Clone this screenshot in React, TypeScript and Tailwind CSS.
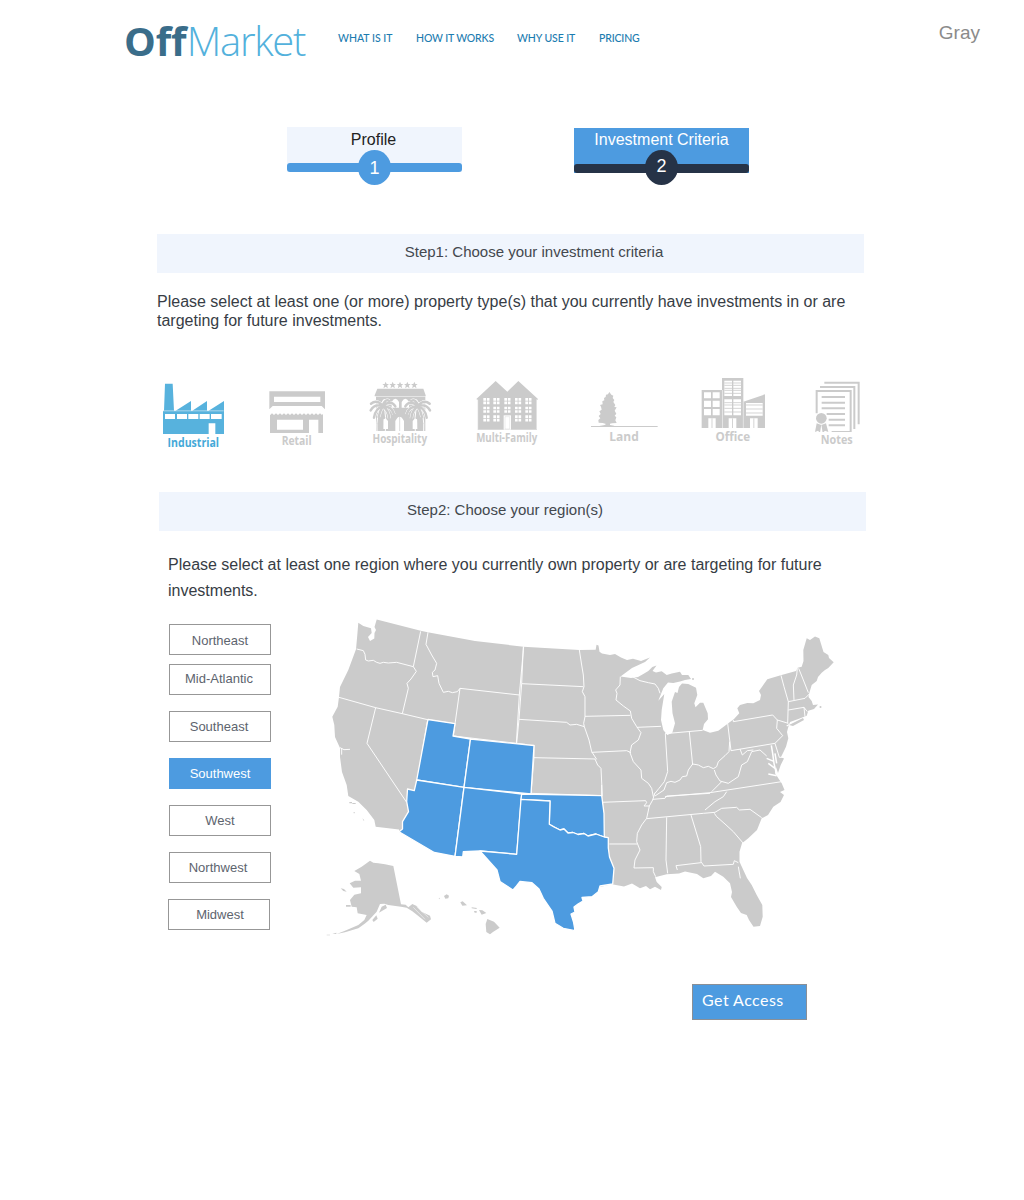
import React from "react";

const GRAY = "#cbcbcb";
const BLUE = "#4d9be0";

const navItems = [
  { label: "WHAT IS IT", cls: "ml-[33px] w-[54px]" },
  { label: "HOW IT WORKS", cls: "ml-[24px] w-[78px] tracking-[-0.15px]" },
  { label: "WHY USE IT", cls: "ml-[23px] w-[58px] tracking-[-0.1px]" },
  { label: "PRICING", cls: "ml-[24px] w-[42px] tracking-[-0.15px]" },
];

function Header() {
  return (
    <header className="flex h-[80px] pl-[124px] pr-[44px]">
      <div className="flex h-[80px] w-[181px] whitespace-nowrap font-['Open_Sans'] text-[40px] leading-[82px]">
        <span className="w-[63px] font-bold tracking-[-0.2px] text-[#3a6d8a] [font-variant-ligatures:none]">Off</span>
        <span className="font-light tracking-[-1.3px] text-[#53b1dc]">Market</span>
      </div>
      <nav className="flex font-['Lato'] text-[10.5px] leading-[77px] text-[#1c7cb0]">
        {navItems.map((n) => (
          <a key={n.label} className={"whitespace-nowrap font-medium " + n.cls}>
            {n.label}
          </a>
        ))}
      </nav>
      <span className="ml-auto text-[19px] leading-[66px] text-[#8b8b8b]">Gray</span>
    </header>
  );
}

function Steps() {
  return (
    <div className="mt-[47px] flex h-[58px] pl-[287px]">
      <div className="relative h-[45px] w-[175px] bg-[#f0f5fd] text-center">
        <p className="pr-[2px] text-[16px] leading-[26px] text-[#222]">Profile</p>
        <div className="absolute inset-x-0 bottom-0 h-[9px] rounded-[3px] bg-[#4d9be0]" />
        <div className="absolute left-[71px] top-[23px] h-[35px] w-[33px] rounded-[50%] bg-[#4d9be0] text-[18px] leading-[36px] text-white">1</div>
      </div>
      <div className="relative ml-[112px] mt-px h-[45px] w-[175px] bg-[#4d9be0] text-center text-white">
        <p className="text-[16px] leading-[24px]">Investment Criteria</p>
        <div className="absolute inset-x-0 bottom-0 h-[9px] rounded-[3px] bg-[#263347]" />
        <div className="absolute left-[71px] top-[22px] h-[35px] w-[33px] rounded-[50%] bg-[#263347] text-[18px] leading-[33px]">2</div>
      </div>
    </div>
  );
}

function Industrial() {
  return (
    <g fill="#57b2dd">
      <path d="M45 41h23l4 81h5l46-29v29h4l44-29v29h5l46-29v99H39v-70h3z" />
      <path d="M39 122.500h182" stroke="#fff" strokeWidth="1.500" />
      <path d="M45 132h30v15H45zM81 132h30v15H81zM115 132h30v15h-30zM149 132h30v15h-30zM183 132h32v15h-32zM176 160h20v32h-20z" fill="#fff" />
    </g>
  );
}

function Retail() {
  return (
    <g fill={GRAY}>
      <path fillRule="evenodd" d="M358 64h167v54l-10-10H368l-10 10zM372 80v16h139V80z" />
      <path fillRule="evenodd" d="M360 136l6-6 6 5 6-5 6 5 6-5 6 5 6-5 6 5 6-5 6 5 6-5 6 5 6-5 6 5 6-5 6 5 6-5 6 5 6-5 6 5 6-5 6 5 6-5 6 5 6-5 6 5 3-4v58h-14v-40h-28v40H360zM381 149v30h78v-30z" />
    </g>
  );
}

const star = "M0-10l3 7h7l-5.500 4.500 2 8L0 5l-6.500 4.500 2-8L-10-3h7z";

function Palm() {
  return (
    <g>
      <path d="M-3-8Q-20 20-17 68M3-8Q12 25 8 68" fill="none" stroke="#fff" strokeWidth="3" />
      <path d="M-2-8Q-12 25-12 68h14Q3 25 2-8z" fill={GRAY} />
      <path d="M0-8Q-18-28-35-14M0-8Q-25-14-36 6M0-6Q-22 0-26 28M0-6Q-8 8-12 26M0-8Q8-30 20-22M0-8Q26-26 38-6M0-6Q28-6 34 18M0-6Q18 6 20 30" fill="none" stroke="#fff" strokeWidth="10" />
      <path d="M0-8Q-18-28-35-14M0-8Q-25-14-36 6M0-6Q-22 0-26 28M0-6Q-8 8-12 26M0-8Q8-30 20-22M0-8Q26-26 38-6M0-6Q28-6 34 18M0-6Q18 6 20 30" fill="none" stroke={GRAY} strokeWidth="7.500" strokeLinecap="round" />
    </g>
  );
}

function Hospitality() {
  return (
    <g fill={GRAY}>
      {[92, 113, 135, 157, 178].map((x) => (
        <path key={x} d={star} transform={"translate(" + x + " 45)"} />
      ))}
      <path d="M67 56h138l7 20v3H59v-3zM63 80h148v103H63z" />
      <path d="M80 103v-6q8-20 18 0v6zM110 113V96q11-20 22 0v17zM140 113V96q11-20 22 0v17zM173 103v-6q9-20 18 0v6zM121 183v-30q13-26 26 0v30zM80 177v-24q10-14 19 0v24zM173 177v-24q9-14 18 0v24z" fill="#fff" />
      <path d="M134 138v45" stroke={GRAY} strokeWidth="2" />
      <g transform="translate(83 115)"><Palm /></g>
      <g transform="translate(189 115) scale(-1 1)"><Palm /></g>
    </g>
  );
}

function MultiFamily() {
  const rows = [84, 110, 136];
  return (
    <g fill={GRAY}>
      <path d="M364 87l58-54 35 32 33-32 59 54-3 4v88H368V91z" />
      <path d="M368 88V178M545 88V178" stroke="#fff" strokeWidth="1.500" />
      {rows.map((y) =>
        [385, 415, 448, 480, 511].map((x) =>
          y === 136 && x === 448 ? null : (
            <g key={x + "-" + y} fill="#fff">
              <path d={"M" + x + " " + y + "h8v8h-8zm10.500 0h8v8h-8zm-10.500 10.500h8v8h-8zm10.500 0h8v8h-8z"} />
            </g>
          )
        )
      )}
      <path d="M446 136h22v43h-22z" fill="#fff" />
      <path d="M450 140h14v37h-14z" fill="none" stroke={GRAY} strokeWidth="1" />
    </g>
  );
}

function Land() {
  return (
    <g fill={GRAY}>
      <path d="M88 66l6 8 6 3-2 7 5 6-3 6 6 9-3 6 7 1-6 10 5 9-5 6 5 5-3 9 4 8-14 1-6 1v4l12 2 1 1H58l16-3 4-3-10-3-12-1-1-8 6-5-5-7 6-6-4-8 7-5-2-9-3-5 8-2-1-9 6-3-1-7 5-3 1-7 6-1z" />
      <path d="M33 169.500h200" stroke={GRAY} strokeWidth="3" />
    </g>
  );
}

function Office() {
  return (
    <g fill={GRAY}>
      <path d="M365 60h61V24h64v71l65-22v101H365z" />
      <path d="M427.500 60v114M490 95v79" stroke="#fff" strokeWidth="1.500" />
      <path d="M372 67h21v18h-21zM398 67h21v18h-21zM372 92h21v19h-21zM398 92h21v19h-21zM372 117h21v19h-21zM398 117h21v19h-21zM385 145h22v29h-22zM433 32h23v46h-23zM460 32h23v46h-23zM433 88h23v48h-23zM460 88h23v48h-23zM446 145h23v29h-23zM498 99h50v38h-50zM510 145h23v29h-23z" fill="#fff" />
      <path d="M433 39h50M433 46h50M433 55h50M433 61h50M433 70h50M433 98h50M433 105h50M433 115h50M433 126h50M498 105h50M498 117h50M498 129h50M396 145v29M457.500 145v29M521.500 145v29" stroke={GRAY} strokeWidth="2.500" />
    </g>
  );
}

function Notes() {
  return (
    <g fill="none" stroke={GRAY} strokeWidth="6">
      <path d="M733 38h103v125M720 51h103v126M710 130V63h102v123h-57" />
      <path d="M725 81h70M725 98h70M725 115h70M740 132h55M746 149h49M746 166h49" />
      <circle cx="724" cy="145" r="16" fill={GRAY} stroke="none" />
      <path d="M710 160l-5 26 9-4 6 7 4-26 4 26 7-7 10 4-7-26-14 5z" fill={GRAY} stroke="none" />
    </g>
  );
}

const types = [
  { name: "Industrial", Icon: Industrial, box: "30 0 204 195", size: "h-[65px] w-[68px]", m: "", label: "leading-[15px] -ml-[2px] text-[#45a9d8] text-[12px] scale-x-[.88]" },
  { name: "Retail", Icon: Retail, box: "339 0 204 192", size: "h-[64px] w-[68px]", m: "ml-[35px]", label: "leading-[14px] text-[11.500px] scale-x-[.9]" },
  { name: "Hospitality", Icon: Hospitality, box: "33 0 204 186", size: "h-[62px] w-[68px]", m: "ml-[35px]", label: "leading-[14px] text-[12px] scale-x-[.83]" },
  { name: "Multi-Family", Icon: MultiFamily, box: "354 0 204 183", size: "h-[61px] w-[68px]", m: "ml-[39px]", label: "leading-[14px] text-[12px] scale-x-[.81]" },
  { name: "Land", Icon: Land, box: "30 0 204 177", size: "h-[59px] w-[68px]", m: "ml-[49px]", label: "leading-[16px] text-[12px]" },
  { name: "Office", Icon: Office, box: "357 0 204 177", size: "h-[59px] w-[68px]", m: "ml-[41px]", label: "leading-[16px] text-[12px] scale-x-[.97]" },
  { name: "Notes", Icon: Notes, box: "669 0 204 186", size: "h-[62px] w-[68px]", m: "ml-[36px]", label: "leading-[15px] text-[12px] scale-x-[.9]" },
];

function PropertyTypes() {
  return (
    <div className="mt-[40px] flex h-[82px] pl-[160px]">
      {types.map(({ name, Icon, box, size, m, label }) => (
        <div key={name} className={"flex w-[68px] flex-col items-center " + m}>
          <svg viewBox={box} className={size}>
            <Icon />
          </svg>
          <span className={"whitespace-nowrap font-['Open_Sans'] font-bold " + (name === "Industrial" ? "" : "text-[#cbcbcb] ") + label}>
            {name}
          </span>
        </div>
      ))}
    </div>
  );
}

const mainland =
  "M358.300 622.700L363.300 626 371 628.300 371.700 633 368 637 370 641 374.300 638.500 374.500 633 376 630 374.500 627 376.700 619.500 420.700 630.700 427.700 632.300 475 641 523.500 646.700 579.300 650 595.700 649.700 596.500 644.700 598.500 645.500 599.500 651.700 602 653.500 610 655 615 654 621 657.500 627 660 633 658.700 641 661 650 657.500 645 662 632 668 620.500 676.500 631 678 638 677 643.300 674 648.300 671 652.300 667 656.500 665.500 652.500 671 656 672.500 661.700 671.300 666.700 675 671.700 673.500 680 671.700 682 675 688.300 675 691 679 685 680 680 681.500 673.300 683 668 682.500 663.300 688.300 658.300 700.700 664.300 694 661.700 710 661 720 663.300 730 667.300 735 672.300 732.700 675 723.300 672.500 713.300 671.700 701.700 675 692 677.500 693 679 687 682 683.500 688.300 684 696 687.700 697.300 695 694.300 703.300 695.500 707.300 700 702.700 703.300 702.700 707.700 713.300 708 719.300 704 724 702.700 730 710 732.700 718.300 730.700 728.300 723.300 734 719 739.300 713.300 737.300 708.300 740 705 747.300 703 753.300 703.300 760 700 761 695 759 691 767.300 679.300 780.700 675.300 796 671 797.700 667.700 801.700 666.700 803.500 661 803.300 650 806.700 638.300 810 640 815 636.500 819.300 638.300 823.500 652 828.300 655 829 658 833.700 662.300 828.300 668 825 670 821.700 672.700 818 677 816.700 681 811.700 685 809 694 808.500 697 811.700 701 813 705 818 704.500 814 709 808.300 710.700 806.700 715.700 798.300 719 790 722 788 728 787 732 788.300 738.300 786 746.700 783 753 781 757 784 758.500 780.700 765 778 773 776 767 775 773 778.300 778.300 781.700 783.300 784.500 790 780 792 784 795 780.500 802 773.300 806.700 768 815 761.700 818.300 757 830 748.300 838.300 742 843.300 739.500 851.700 739.500 861.700 743.300 870 747 878 751.700 885 756.700 895 762.300 905 762.700 916.700 760 926 753.500 926.700 749 920 746.700 915 741 913 736.700 906.700 731 897 732 892 730 883.300 723.300 876.700 715 871.700 711 876 703.300 878.300 697 874 685 871.500 679 873.500 666.700 874.300 655 877.300 656.700 882 661.700 887 661 890 655 886.700 650 889.300 646 886 640 888.300 632 883.500 624 886.500 612 884.300 600 887 560 870 500 850 463 852 434 852.300 399 831.700 399 829.500 375.700 826.700 374.300 820 366.700 810 358.300 801.700 348.300 796 346.700 785 342 772 340 757 340 748 335 737 334.300 725 332.300 716.700 337.700 706.700 339 697 340 687 348.300 670 356 649.300 357.300 635z";

const texas =
  "M521 799.300L550 801 549.300 824.300 554 827 560 830 564 829 568 833 573 832.500 578 834.500 584 833.500 588 836 596 834 600 835.500 604.300 837 608.300 837.700 608.300 848 609.500 857 614 868.300 612.700 884 600 886 598.300 891.700 592 896.700 582 897.500 583 901 578 904 574 907 575 912 571 914 573.500 922 575 930.700 563.300 928.300 555 923.300 552 911 543.300 898.300 539 889 532 882.700 520 881.500 516.500 886 513 890 500 881.500 497 870 480 851 516.700 854.300z";

const southwest = [
  "M428 719.500L455 723.700 453 736 470.500 739 464 787.300 416.700 780z",
  "M470.500 739L534 745.500 531 794 464 787.300z",
  "M416.700 780L464 787.300 455 856.300 434.300 852.500 399 831.700 402.500 829 402.500 821.700 408.500 811.700 406.700 801.700 407.500 789 414.300 790.700z",
  "M464 787.300L521.700 794 516.700 854.300 480 851 463.300 851.700 462.700 857 455 856.300z",
  "M521.700 794L601.700 795.700 604 813.300 604.300 837 596 834 588 836 584 833.500 578 834.500 573 832.500 568 833 564 829 560 830 549.300 824.300 550 801 521 799.300z",
  texas,
];

function UsMap() {
  return (
    <svg viewBox="325 610 520 335" className="h-[335px] w-[520px]">
      <path d={mainland} fill={GRAY} />
      <g fill="none" stroke="#fff" strokeWidth="2.800" strokeLinejoin="round">
        <g transform="translate(325 610) scale(.33333)">
          <path d="M95 117L115 122 120 133 122 150 130 153 145 151 155 157 165 160 175 157 190 159 215 157 265 170M287 64L265 170 274 184 258 207 246 220 250 235 232 311M309 67L303 103 320 135 335 160 330 180 322 187 324 200 338 197 342 220 355 247 370 244 382 248 397 245 405 235 583 255 574 400M405 235L385 378 600 403M596 109L583 255M42 262L152 293 232 311 308 329 388 341M152 293L126 400 245 577M308 329L277 510" />
          <path d="M45 413l12 6 18-1" />
          <path d="M50 414v20" />
        </g>
        <g transform="translate(515 630) scale(.33333)">
          <path d="M20 161L205 170M25 50L20 161 12 268 5 340M193 60L200 105 205 135 207 170 202 185 210 200 210 260 206 280 208 290M12 268L155 277 165 285 185 283 208 290 222 330 230 365 245 388M57 383L240 387 248 405 258 415 262 497M57 345V383L48 490 262 497M210 259L346 256M316 140L315 165 302 180 306 190 303 210 325 228 346 243 350 265 365 290 378 308 370 330 350 345 345 368 355 395 378 420 380 445 400 460 410 475 415 500M230 367L335 362 348 368M366 292L438 289M352 140L375 152 400 158 420 162 430 175 435 190M451 312L458 425 448 455 432 475 420 490" />
        </g>
        <g transform="translate(660 620) scale(.33333)">
          <path d="M15 341L128 331M88 335L98 435M-15 528L12 510 20 488 33 484 45 487 60 480 67 470 80 468 85 450 98 432 115 435 130 443 145 439 160 446 170 440 175 425 195 407 207 395 209 365M203 310L213 392 345 370 M220 300V305L338 285 352 300 385 310M352 300L350 325 368 347 345 370M363 166L372 200 385 245 383 310M412 145L410 165 400 195 402 240M385 245L435 235 448 222M416 145L430 180 445 218M385 270L432 262 442 275M432 262L435 290M345 370L358 412 372 412M163 450L168 465 180 483 205 490 235 470 245 435 262 425 275 395 300 390 320 408M240 387L247 405 262 392 280 390M15 530L150 518 365 485M185 485L155 515M200 515L190 530 165 545 135 570" />
          <path d="M334 376L338 400 342 430 350 465M343 425L320 415M345 445L325 430M350 467L325 462M345 400L350 430" strokeWidth="4.500" />
          <path d="M380 318L400 307 440 293" strokeWidth="4" />
        </g>
        <g transform="translate(600 770) scale(.33333)">
          <path d="M5 97L137 92 140 98 132 108 148 108 140 145 125 165 112 190 110 215 120 240 105 270 102 294 160 293 160 305 167 320M165 68L158 90 148 108M158 88L195 85 200 78 330 70M140 146L310 130 345 127M345 127L365 115 410 112 418 120 450 118 485 143M343 130L350 140 375 162 400 185 430 220M200 142L198 270 203 310M273 135L302 230 303 275 312 288 400 283 403 272 415 278M232 300L228 287 303 278M28 222L112 222M5 45L5 97M415 290l6 35" />
        </g>
      </g>
      <g fill={BLUE} stroke="#fff" strokeWidth="1.300" strokeLinejoin="round">
        {southwest.map((d) => (
          <path key={d} d={d} />
        ))}
      </g>
      <g fill={GRAY}>
        <path d="M789 725L803 718 804 720 793 726z" />
        <circle cx="820.500" cy="707" r="1" />
        <circle cx="693" cy="679" r="1" />
        <g transform="translate(325 770) scale(.33333)">
          <path d="M135 272L145 278 160 280 180 283 205 288 228 403 242 404 250 412 262 402 275 408 290 425 315 437 318 448 305 458 280 438 262 424 245 413 228 410 190 405 178 401 165 402 155 425 130 452 118 462 100 475 60 487 35 492 60 482 100 465 118 450 125 435 98 430 95 412 80 410 75 390 88 374 108 370 108 352 85 353 74 340 90 332 108 332 103 312 88 303 110 290z" />
          <path d="M170 410l12-6 4 10-14 8-10 6zM47 355l10 2 8 8-10-2zM63 405h14v5H63zM142 450l12-14 4 10-12 10zM5 494l10 0 0 2-10 0zM22 491l12-3v4zM73 96h8v4h-8zM82 99h10v3H82zM86 126h3v4h-3zM112 145l6 6-2 1z" />
          <path d="M265 412l35 36M275 410l35 32" stroke="#fff" strokeWidth="1.500" />
          <path d="M357 378l8-5 7 4-2 8-9 1zM341 385l4-2-2 5zM406 397l7-3 13 12-14 1zM440 412l16 2-2 3-14-2zM447 423l8 0 0 5-6 0zM462 420l10 1 12 8-14 5zM487 447L507 455 524 473 505 485 495 493 484 486 482 462z" />
        </g>
      </g>
    </svg>
  );
}

const regions = [
  { name: "Northeast", cls: "mt-0 ml-px leading-[31px]" },
  { name: "Mid-Atlantic", cls: "mt-[9px] ml-px pr-[2px] pb-[3px] leading-[27px]" },
  { name: "Southeast", cls: "mt-[16px] ml-px pr-[2px] leading-[29px]" },
  { name: "Southwest", cls: "mt-[16px] ml-px leading-[29px]" },
  { name: "West", cls: "mt-[16px] ml-px leading-[29px]" },
  { name: "Northwest", cls: "mt-[16px] ml-px pr-[4px] leading-[29px]" },
  { name: "Midwest", cls: "mt-[16px] ml-0 pl-[2px] leading-[29px]" },
];

function RegionList() {
  return (
    <div className="mt-[14px] flex w-[103px] flex-col">
      {regions.map(({ name, cls }) => (
        <button
          key={name}
          className={
            "h-[31px] w-[102px] border text-center text-[13px] " +
            (name === "Southwest" ? "border-[#4d9be0] bg-[#4d9be0] text-white " : "border-[#979797] text-[#5d646e] ") +
            cls
          }
        >
          {name}
        </button>
      ))}
    </div>
  );
}

export default function App() {
  return (
    <div className="h-[1200px] w-[1024px] overflow-hidden bg-white font-['Liberation_Sans',sans-serif]">
      <Header />
      <Steps />
      <h2 className="ml-[157px] mt-[49px] h-[39px] w-[707px] bg-[#f0f5fd] pl-[47px] text-center text-[15px] leading-[36px] text-[#43484e]">
        Step1: Choose your investment criteria
      </h2>
      <p className="ml-[157px] mt-[19px] w-[707px] text-[16px] leading-[19px] text-[#373d45]">
        Please select at least one (or more) property type(s) that you currently have investments in or are
        <br />
        targeting for future investments.
      </p>
      <PropertyTypes />
      <h2 className="ml-[159px] mt-[40px] h-[39px] w-[707px] bg-[#f0f5fd] pr-[15px] text-center text-[15px] leading-[36px] text-[#43484e]">
        Step2: Choose your region(s)
      </h2>
      <p className="ml-[168px] mt-[21px] w-[690px] text-[16px] leading-[26px] text-[#373d45]">
        Please select at least one region where you currently own property or are targeting for future
        <br />
        investments.
      </p>
      <div className="mt-[6px] flex pl-[168px]">
        <RegionList />
        <div className="ml-[54px]">
          <UsMap />
        </div>
      </div>
      <button className="ml-[692px] mt-[39px] block h-[36px] w-[115px] border border-[#8a8f96] bg-[#4d9be0] pb-[4px] pl-[9px] text-left font-['Lato'] text-[16px] leading-[30px] tracking-[0.45px] text-white">
        Get Access
      </button>
    </div>
  );
}
